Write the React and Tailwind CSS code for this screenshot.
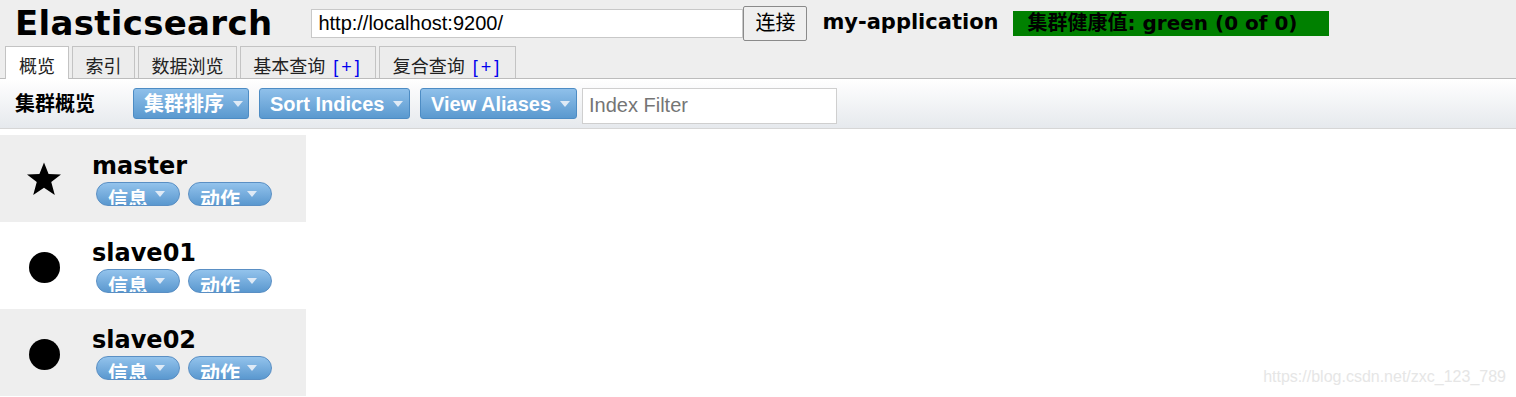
import React from "react";

const verdana = { fontFamily: '"DejaVu Sans", "Noto Sans CJK SC", sans-serif' };

function Caret({ ml = "ml-[9px]" }) {
  return (
    <svg width="10" height="6" viewBox="0 0 10 6" className={`inline-block shrink-0 ${ml}`}>
      <path d="M0 0 L10 0 L5 6 Z" fill="#dfeaf6" />
    </svg>
  );
}

function ToolBtn({ children, w }) {
  return (
    <div className={`h-[31px] ${w} pl-[10px] flex items-center rounded-[3px] border border-[#4d8cc4] bg-gradient-to-b from-[#8fc0ea] to-[#5a99cf] text-white font-bold text-[20px] leading-none whitespace-nowrap`}>
      {children}
      <Caret />
    </div>
  );
}

function Pill({ children }) {
  return (
    <div className="h-[24px] w-[84px] rounded-full border border-[#5a8fc4] bg-gradient-to-b from-[#93c3ec] to-[#5a98cf] text-white font-bold text-[20px] overflow-hidden flex items-center pl-[11px]">
      <span className="relative top-[6px] leading-[24px] whitespace-nowrap">{children}</span>
      <Caret ml="ml-[7px]" />
    </div>
  );
}

function Node({ name, icon, gray }) {
  return (
    <div className={`w-[306px] h-[87px] flex items-center ${gray ? "bg-[#eeeeee]" : "bg-white"}`}>
      <div className="w-[90px] flex justify-center pr-[2px]">{icon}</div>
      <div className="flex flex-col">
        <div className="text-[24px] font-bold leading-[28px] text-black pl-[2px]" style={verdana}>{name}</div>
        <div className="flex gap-[8px] pl-[6px] mt-[2px]">
          <Pill>信息</Pill>
          <Pill>动作</Pill>
        </div>
      </div>
    </div>
  );
}

const Star = (
  <svg width="36" height="34" viewBox="0 0 24 23">
    <path d="M12 0.3 L15.1 8.1 L23.5 8.4 L16.9 13.6 L19.3 22.3 L12 17.5 L4.7 22.3 L7.1 13.6 L0.5 8.4 L8.9 8.1 Z" fill="#000" />
  </svg>
);
const Dot = <div className="w-[31px] h-[31px] rounded-full bg-black mt-[4px]" />;

function Tab({ children, active, w }) {
  return (
    <div
      className={`border border-[#c3c3c3] border-b-0 flex items-center justify-center pt-[9px] text-[18px] text-[#222] ${w} ${active ? "bg-white h-[33px] -mb-[1px] relative" : "bg-[#ececec] h-[32px]"}`}
    >
      {children}
    </div>
  );
}

function Plus() {
  return <span className="text-[#0000ee] ml-[8px] tracking-[3px]">[+]</span>;
}

export default function App() {
  return (
    <div className="w-[1516px] h-[397px] bg-white relative overflow-hidden" style={{ fontFamily: '"Liberation Sans", "Noto Sans CJK SC", sans-serif' }}>
      <div className="bg-[#eeeeee] border-b border-[#bcbcbc]">
        <div className="h-[46px] flex items-center">
          <div className="ml-[15px] text-[34px] font-bold leading-none tracking-[0.3px]" style={verdana}>Elasticsearch</div>
          <input
            readOnly
            value="http://localhost:9200/"
            className="ml-[39px] w-[432px] h-[29px] border border-[#c8c8c8] bg-white px-[6px] text-[20px] text-black outline-none"
          />
          <button className="h-[35px] w-[64px] border border-[#8a8a8a] rounded-[2px] bg-[#efefef] text-[20px] text-black">连接</button>
          <div className="ml-[15px] text-[21px] font-bold text-black" style={verdana}>my-application</div>
          <div className="ml-[14px] w-[316px] h-[25px] bg-[#008000] text-[20px] font-bold text-black leading-[25px] pl-[15px]" style={verdana}>集群健康值: green (0 of 0)</div>
        </div>
        <div className="flex gap-[3px] pl-[5px] items-end h-[32px]">
          <Tab active w="w-[64px]">概览</Tab>
          <Tab w="w-[63px]">索引</Tab>
          <Tab w="w-[99px]">数据浏览</Tab>
          <Tab w="w-[136px]">基本查询<Plus /></Tab>
          <Tab w="w-[137px]">复合查询<Plus /></Tab>
        </div>
      </div>
      <div className="h-[50px] bg-gradient-to-b from-white to-[#e6e9ed] border-b border-[#d6d6d6] flex items-center">
        <div className="ml-[15px] w-[118px] text-[20px] font-bold text-black">集群概览</div>
        <div className="flex gap-[10px] items-center">
          <ToolBtn w="w-[116px]">集群排序</ToolBtn>
          <ToolBtn w="w-[151px]">Sort Indices</ToolBtn>
          <ToolBtn w="w-[157px]">View Aliases</ToolBtn>
        </div>
        <input readOnly placeholder="Index Filter" className="ml-[5px] mt-[4px] w-[255px] h-[36px] border border-[#cfcfcf] bg-white px-[6px] text-[20px] placeholder:text-[#757575] outline-none" />
      </div>
      <div className="mt-[6px] flex flex-col">
        <Node name="master" icon={Star} gray />
        <Node name="slave01" icon={Dot} />
        <Node name="slave02" icon={Dot} gray />
      </div>
      <div className="absolute right-[10px] bottom-[8px] text-[16px] text-[#e6e6e6]">https://blog.csdn.net/zxc_123_789</div>
    </div>
  );
}
